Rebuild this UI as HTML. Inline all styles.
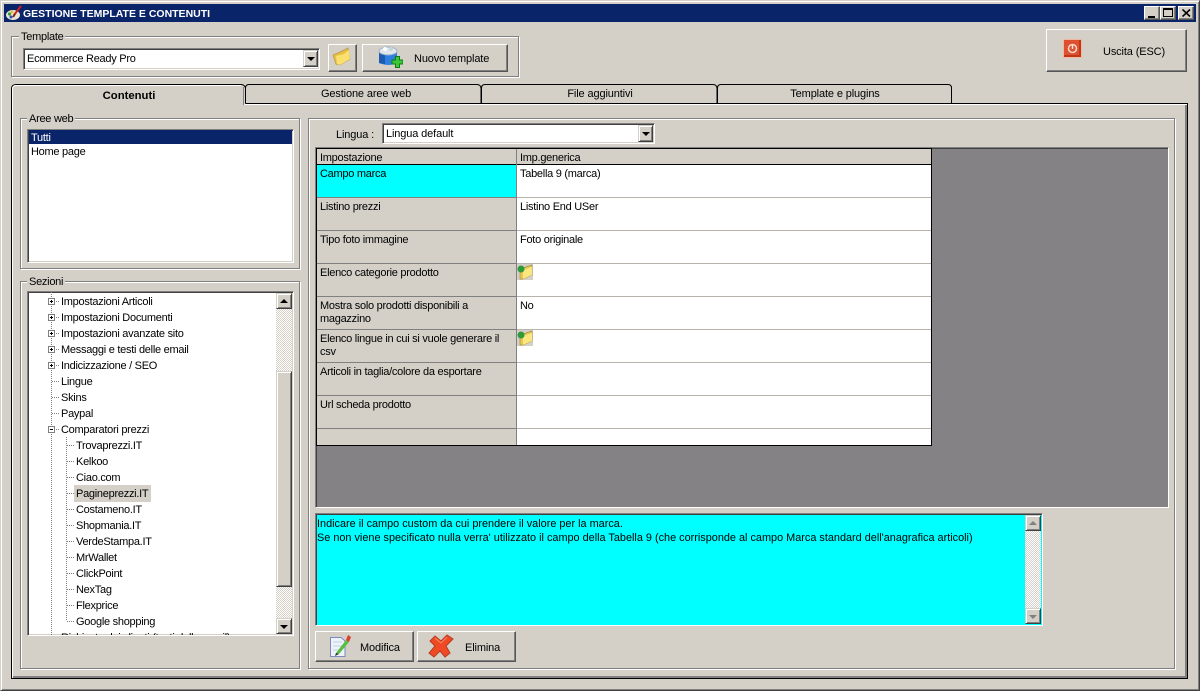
<!DOCTYPE html>
<html><head><meta charset="utf-8"><style>
html,body{margin:0;padding:0;width:1200px;height:691px;overflow:hidden;background:#d4d0c8}
body{font:11px/14px "Liberation Sans",sans-serif;letter-spacing:-.27px;color:#000;position:relative}
.a{position:absolute;box-sizing:border-box}
.t{position:absolute;white-space:nowrap;line-height:14px}
.gb{position:absolute;box-sizing:border-box;border:1px solid #808080;box-shadow:1px 1px 0 #fff,inset 1px 1px 0 #fff}
.lg{position:absolute;background:#d4d0c8;padding:0 2px;line-height:12px;height:12px;white-space:nowrap}
.btn{position:absolute;box-sizing:border-box;background:#d4d0c8;border:1px solid;border-color:#fff #555 #555 #fff;box-shadow:inset -1px -1px 0 #808080}
.sunk{position:absolute;box-sizing:border-box;background:#fff;border:1px solid;border-color:#808080 #fff #fff #808080;box-shadow:inset 1px 1px 0 #404040,inset -1px -1px 0 #d4d0c8}
.arr{position:absolute;box-sizing:border-box;background:#d4d0c8;border:1px solid;border-color:#d4d0c8 #404040 #404040 #d4d0c8;box-shadow:inset 1px 1px 0 #fff,inset -1px -1px 0 #808080}
.dn:after{content:"";position:absolute;left:3px;top:6px;border:4px solid transparent;border-top-color:#000;border-bottom:0}
.up:after{content:"";position:absolute;left:3px;top:5px;border:4px solid transparent;border-bottom-color:#000;border-top:0}
.gr:after{border-top-color:#808080;border-bottom-color:#808080}
.track{position:absolute;background:conic-gradient(#d4d0c8 25%,#fff 0 50%,#d4d0c8 0 75%,#fff 0) 0 0/2px 2px}
.c{position:absolute;box-sizing:border-box;border-bottom:1px solid #b8b4ac;padding:3px 3px 0;line-height:13px;overflow:hidden}
.k{left:317px;width:199px;background:#d4d0c8;border-color:#808080}
.v{left:517px;width:414px;background:#fff}
.ctr{position:absolute;white-space:nowrap;text-align:center}
.b2{letter-spacing:-.13px}
</style></head><body>

<!-- window frame -->
<div class="a" style="left:0;top:0;width:1200px;height:691px;border:1px solid;border-color:#d4d0c8 #404040 #404040 #d4d0c8;box-shadow:inset 1px 1px 0 #fff,inset -1px -1px 0 #808080"></div>
<div class="a" style="left:4px;top:4px;width:1192px;height:18px;background:#0a246a"></div>
<svg class="a" style="left:5px;top:5px" width="18" height="16" viewBox="0 0 18 16"><ellipse cx="8" cy="10" rx="7" ry="5" fill="#e8e4d8"/><circle cx="4.500" cy="9" r="1.600" fill="#3a9a3a"/><circle cx="7" cy="7" r="1.400" fill="#e0c020"/><circle cx="6" cy="12" r="1.500" fill="#3050c0"/><path d="M9 10 L16 1" stroke="#d02020" stroke-width="2"/><path d="M8 12 L10 9" stroke="#703010" stroke-width="2"/></svg>
<div class="t" style="left:23px;top:7px;color:#fff;font-weight:bold;font-size:10.5px;letter-spacing:0">GESTIONE TEMPLATE E CONTENUTI</div>
<div class="btn" style="left:1144px;top:6px;width:16px;height:14px"><div class="a" style="left:3px;top:9px;width:7px;height:2px;background:#000"></div></div>
<div class="btn" style="left:1160px;top:6px;width:16px;height:14px"><div class="a" style="left:2px;top:1px;width:10px;height:9px;border:1px solid #000;border-top-width:2px"></div></div>
<div class="btn" style="left:1178px;top:6px;width:16px;height:14px"><svg class="a" style="left:3px;top:2px" width="9" height="8"><path d="M0.500 0.500L8 7.500M8 .5L.5 7.500" stroke="#000" stroke-width="1.600"/></svg></div>

<!-- template group -->
<div class="gb" style="left:11px;top:36px;width:508px;height:41px"></div>
<div class="lg" style="left:19px;top:31px">Template</div>
<div class="sunk" style="left:23px;top:48px;width:297px;height:22px"></div>
<div class="t" style="left:27px;top:52px">Ecommerce Ready Pro</div>
<div class="arr dn" style="left:303px;top:50px;width:15px;height:17px"></div>
<div class="btn" style="left:328px;top:44px;width:29px;height:28px"></div>
<svg class="a" style="left:332px;top:47px" width="20" height="20" viewBox="0 0 20 20"><path d="M1 8 L8 5 L16 1 L18 12 L8 18 L4 17Z" fill="#e8bf40" stroke="#b89a50" stroke-width=".8"/><path d="M4 9 L12 7 L17 3 L18 12 L8 18 L5 17Z" fill="#fbe070"/></svg>
<div class="btn" style="left:362px;top:44px;width:146px;height:28px"></div>
<svg class="a" style="left:377px;top:45px" width="26" height="24" viewBox="0 0 26 24"><path d="M2 7 H20 V18 Q11 22 2 18Z" fill="#2f7fe0"/><path d="M2 7 H8 V19 L2 18Z" fill="#1c5bb0"/><ellipse cx="11" cy="6" rx="9" ry="4" fill="#dfe6ee" stroke="#9fb0c4"/><circle cx="8" cy="4" r="2" fill="#fff"/><circle cx="14" cy="4" r="2" fill="#c8d2de"/><path d="M15 15 h3.500 v-3.500 h4 v3.500 h3.500 v4 h-3.500 v3.500 h-4 v-3.500 h-3.500z" fill="#38c838" stroke="#127a12"/></svg>
<div class="t b2" style="left:414px;top:52px">Nuovo template</div>

<!-- exit -->
<div class="btn" style="left:1046px;top:29px;width:141px;height:43px"></div>
<div class="a" style="left:1063px;top:39px;width:19px;height:19px;background:#dd5030;border:1px solid #f0b8a0;box-shadow:inset -2px -2px 0 #c03818"></div>
<svg class="a" style="left:1063px;top:39px" width="19" height="19"><circle cx="9.500" cy="9.500" r="4" fill="none" stroke="#fbd4c4" stroke-width="1.600"/><path d="M9.500 6v4" stroke="#fbe0d4" stroke-width="1.500"/></svg>
<div class="t b2" style="left:1103px;top:45px">Uscita (ESC)</div>

<!-- tab panel -->
<div class="a" style="left:11px;top:103px;width:1177px;height:576px;border:1px solid #000;box-shadow:inset 1px 1px 0 #fff,inset -2px -2px 0 #808080"></div>
<svg class="a" style="left:0;top:80px" width="1000" height="28" viewBox="0 0 1000 28">
<path d="M245.500 23.500V8Q245.500 4.500 249 4.500H477Q480.500 4.500 481 8V23.500H245.500ZM481.500 23.500V8Q481.500 4.500 485 4.500H713Q716.500 4.500 717 8V23.500ZM717.500 23.500V8Q717.500 4.500 721 4.500H948Q951.500 4.500 951.500 8V23.500Z" fill="#d4d0c8" stroke="#000"/>
<path d="M11.500 26V9Q11.500 4.500 16 4.500H241Q244.500 4.500 245.500 8V25H13V26Z" fill="#d4d0c8"/>
<path d="M11.500 26V9Q11.500 4.500 16 4.500H241Q244.500 4.500 245.500 8V23.500" fill="none" stroke="#000"/>
<path d="M12.500 26V9Q12.500 5.500 16 5.500H241" fill="none" stroke="#fff"/>
<path d="M243.500 7V25" stroke="#808080"/>
<path d="M244.500 24.500H952" stroke="#fff" />
</svg>
<div class="a" style="left:13px;top:100px;width:230px;height:6px;background:#d4d0c8"></div>
<div class="ctr" style="left:12px;top:89px;width:234px;font-weight:bold;font-size:11.300px;letter-spacing:0">Contenuti</div>
<div class="ctr b2" style="left:248px;top:87px;width:236px">Gestione aree web</div>
<div class="ctr b2" style="left:482px;top:87px;width:236px">File aggiuntivi</div>
<div class="ctr b2" style="left:718px;top:87px;width:234px">Template e plugins</div>

<!-- aree web -->
<div class="gb" style="left:20px;top:118px;width:280px;height:151px"></div>
<div class="lg" style="left:27px;top:113px">Aree web</div>
<div class="sunk" style="left:27px;top:129px;width:267px;height:134px"></div>
<div class="a" style="left:29px;top:130px;width:263px;height:14px;background:#0a246a"></div>
<div class="t" style="left:31px;top:131px;color:#fff">Tutti</div>
<div class="t" style="left:31px;top:145px">Home page</div>

<!-- sezioni -->
<div class="gb" style="left:20px;top:281px;width:280px;height:388px"></div>
<div class="lg" style="left:27px;top:276px">Sezioni</div>
<div class="sunk" style="left:27px;top:291px;width:267px;height:345px;overflow:hidden">
<svg class="a" style="left:0;top:0" width="250" height="345" viewBox="28 292 250 345">
<g stroke="#808080" stroke-dasharray="1 1" fill="none" shape-rendering="crispEdges">
<path d="M51.500 292V637"/><path d="M66.500 437V621"/>
<path d="M52 301.500H60M52 317.500H60M52 333.500H60M52 349.500H60M52 365.500H60M52 381.500H60M52 397.500H60M52 413.500H60M52 429.500H60"/>
<path d="M67 445.500H75M67 461.500H75M67 477.500H75M67 493.500H75M67 509.500H75M67 525.500H75M67 541.500H75M67 557.500H75M67 573.500H75M67 589.500H75M67 605.500H75M67 621.500H75"/>
</g>
<g shape-rendering="crispEdges">
<g fill="#fff" stroke="#808080"><rect x="48.500" y="298.500" width="6" height="6"/><rect x="48.500" y="314.500" width="6" height="6"/><rect x="48.500" y="330.500" width="6" height="6"/><rect x="48.500" y="346.500" width="6" height="6"/><rect x="48.500" y="362.500" width="6" height="6"/><rect x="48.500" y="426.500" width="6" height="6"/></g>
<path d="M50 301.500h3M51.500 300v3M50 317.500h3M51.500 316v3M50 333.500h3M51.500 332v3M50 349.500h3M51.500 348v3M50 365.500h3M51.500 364v3M50 429.500h3" stroke="#000"/>
</g>
</svg>
<div class="a" style="left:46px;top:193px;width:77px;height:17px;background:#d4d0c8"></div>
<div style="position:absolute;left:-28px;top:-291px">
<div class="t" style="left:61px;top:294px">Impostazioni Articoli</div>
<div class="t" style="left:61px;top:310px">Impostazioni Documenti</div>
<div class="t" style="left:61px;top:326px">Impostazioni avanzate sito</div>
<div class="t" style="left:61px;top:342px">Messaggi e testi delle email</div>
<div class="t" style="left:61px;top:358px">Indicizzazione / SEO</div>
<div class="t" style="left:61px;top:374px">Lingue</div>
<div class="t" style="left:61px;top:390px">Skins</div>
<div class="t" style="left:61px;top:406px">Paypal</div>
<div class="t" style="left:61px;top:422px">Comparatori prezzi</div>
<div class="t" style="left:76px;top:438px">Trovaprezzi.IT</div>
<div class="t" style="left:76px;top:454px">Kelkoo</div>
<div class="t" style="left:76px;top:470px">Ciao.com</div>
<div class="t" style="left:76px;top:486px">Pagineprezzi.IT</div>
<div class="t" style="left:76px;top:502px">Costameno.IT</div>
<div class="t" style="left:76px;top:518px">Shopmania.IT</div>
<div class="t" style="left:76px;top:534px">VerdeStampa.IT</div>
<div class="t" style="left:76px;top:550px">MrWallet</div>
<div class="t" style="left:76px;top:566px">ClickPoint</div>
<div class="t" style="left:76px;top:582px">NexTag</div>
<div class="t" style="left:76px;top:598px">Flexprice</div>
<div class="t" style="left:76px;top:614px">Google shopping</div>
<div class="t" style="left:61px;top:630px">Richieste dai clienti (testi delle email)</div>
</div>
</div>
<div class="track" style="left:276px;top:293px;width:16px;height:341px"></div>
<div class="arr up" style="left:276px;top:293px;width:16px;height:16px"></div>
<div class="arr" style="left:276px;top:371px;width:16px;height:216px"></div>
<div class="arr dn" style="left:276px;top:618px;width:16px;height:16px"></div>

<!-- right group -->
<div class="gb" style="left:308px;top:118px;width:867px;height:551px"></div>
<div class="t b2" style="left:336px;top:128px">Lingua :</div>
<div class="sunk" style="left:382px;top:123px;width:273px;height:21px"></div>
<div class="t b2" style="left:386px;top:127px">Lingua default</div>
<div class="arr dn" style="left:638px;top:125px;width:15px;height:17px"></div>

<!-- grid -->
<div class="a" style="left:315px;top:147px;width:854px;height:361px;background:#858285;border:1px solid;border-color:#808080 #fff #fff #808080;box-shadow:inset 1px 1px 0 #404040"></div>
<div class="a" style="left:316px;top:148px;width:616px;height:298px;background:#d4d0c8;border:1px solid #000"></div>
<div class="a" style="left:317px;top:149px;width:614px;height:16px;background:#d4d0c8;border-bottom:1px solid #000"></div>
<div class="a" style="left:516px;top:149px;width:1px;height:296px;background:#808080"></div>
<div class="t" style="left:320px;top:151px">Impostazione</div>
<div class="t" style="left:520px;top:151px">Imp.generica</div>

<div class="c k" style="top:165px;height:33px;background:#0ff">Campo marca</div>
<div class="c v" style="top:165px;height:33px">Tabella 9 (marca)</div>
<div class="c k" style="top:198px;height:33px">Listino prezzi</div>
<div class="c v" style="top:198px;height:33px">Listino End USer</div>
<div class="c k" style="top:231px;height:33px">Tipo foto immagine</div>
<div class="c v" style="top:231px;height:33px">Foto originale</div>
<div class="c k" style="top:264px;height:33px">Elenco categorie prodotto</div>
<div class="c v" style="top:264px;height:33px"></div>
<div class="c k" style="top:297px;height:33px">Mostra solo prodotti disponibili a<br>magazzino</div>
<div class="c v" style="top:297px;height:33px">No</div>
<div class="c k" style="top:330px;height:33px">Elenco lingue in cui si vuole generare il<br>csv</div>
<div class="c v" style="top:330px;height:33px"></div>
<div class="c k" style="top:363px;height:33px">Articoli in taglia/colore da esportare</div>
<div class="c v" style="top:363px;height:33px"></div>
<div class="c k" style="top:396px;height:33px">Url scheda prodotto</div>
<div class="c v" style="top:396px;height:33px"></div>
<div class="c k" style="top:429px;height:16px;border:0"></div>
<div class="c v" style="top:429px;height:16px;border:0"></div>

<svg class="a" style="left:517px;top:264px" width="16" height="16" viewBox="0 0 16 16"><rect width="16" height="16" fill="#d4d0c8"/><path d="M3 5L15 1V11L6 15H3Z" fill="#e8c850" stroke="#a89040" stroke-width=".7"/><path d="M6 6L15 3V11L6 15Z" fill="#fbe680"/><circle cx="4" cy="5" r="3.500" fill="#2e9a3a"/></svg>
<svg class="a" style="left:517px;top:330px" width="16" height="16" viewBox="0 0 16 16"><rect width="16" height="16" fill="#d4d0c8"/><path d="M3 5L15 1V11L6 15H3Z" fill="#e8c850" stroke="#a89040" stroke-width=".7"/><path d="M6 6L15 3V11L6 15Z" fill="#fbe680"/><circle cx="4" cy="5" r="3.500" fill="#2e9a3a"/></svg>

<!-- description -->
<div class="a" style="left:315px;top:513px;width:728px;height:113px;background:#0ff;border:1px solid;border-color:#808080 #fff #fff #808080;box-shadow:inset 1px 1px 0 #404040"></div>
<div class="t" style="left:317px;top:517px;line-height:14px;font-size:10.880px;letter-spacing:0">Indicare il campo custom da cui prendere il valore per la marca.<br>Se non viene specificato nulla verra' utilizzato il campo della Tabella 9 (che corrisponde al campo Marca standard dell'anagrafica articoli)</div>
<div class="track" style="left:1025px;top:515px;width:16px;height:109px"></div>
<div class="arr up gr" style="left:1025px;top:515px;width:16px;height:16px"></div>
<div class="arr dn gr" style="left:1025px;top:608px;width:16px;height:16px"></div>

<!-- bottom buttons -->
<div class="btn" style="left:315px;top:631px;width:99px;height:31px"></div>
<svg class="a" style="left:328px;top:633px" width="24" height="26" viewBox="0 0 24 26"><path d="M2.500 4.500H13L17 8V23.500H2.500Z" fill="#eef2fa" stroke="#7b8bbf"/><path d="M5 9h9M5 13h9M5 17h9" stroke="#c4cde4"/><path d="M8 20L18 7L21 9L11 21Z" fill="#58c040"/><path d="M18 7L20 2L23 4L21 9Z" fill="#d84030"/><path d="M8 20L7 23L11 21Z" fill="#303030"/></svg>
<div class="t b2" style="left:360px;top:641px">Modifica</div>
<div class="btn" style="left:417px;top:631px;width:99px;height:31px"></div>
<svg class="a" style="left:428px;top:633px" width="26" height="26" viewBox="0 0 26 26"><path d="M7 3L13 8L19 2L25 6L18 13L22 20L17 24L12 18L6 24L1 20L7 13L2 8Z" fill="#ee4a25" stroke="#b83a20"/><path d="M7 5L13 10L19 4" stroke="#f88a60" fill="none"/></svg>
<div class="t b2" style="left:465px;top:641px">Elimina</div>

</body></html>
